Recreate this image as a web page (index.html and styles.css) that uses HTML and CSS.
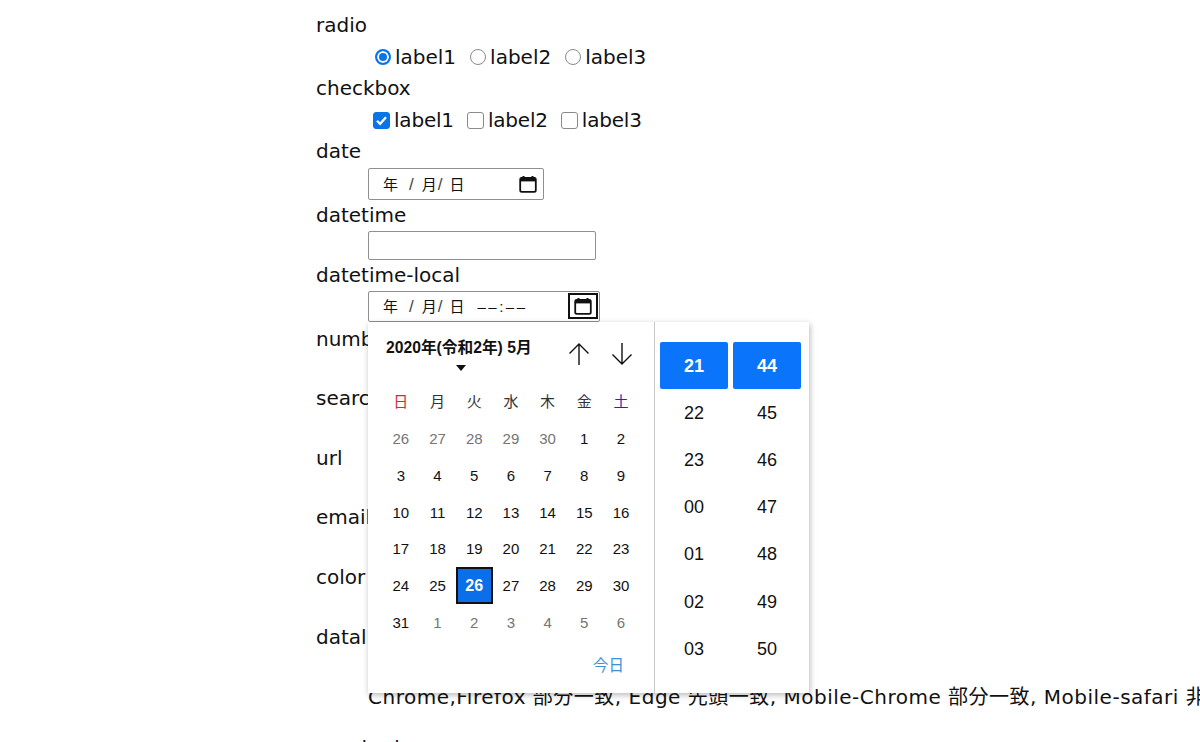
FILE: index.html
```html
<!DOCTYPE html>
<html lang="ja">
<head>
<meta charset="utf-8">
<title>input types</title>
<link rel="stylesheet" href="styles.css">
</head>
<body>
<dl class="form">
  <dt>radio</dt>
  <dd class="choices">
    <label class="choice"><span class="radio on"></span>label1</label>
    <label class="choice"><span class="radio"></span>label2</label>
    <label class="choice"><span class="radio"></span>label3</label>
  </dd>
  <dt>checkbox</dt>
  <dd class="choices checks">
    <label class="choice"><span class="check on"><svg viewBox="0 0 16 16" width="15" height="15"><path d="M3.2 8.3 6.5 11.6 12.8 4.6" fill="none" stroke="#fff" stroke-width="2.4"/></svg></span>label1</label>
    <label class="choice"><span class="check"></span>label2</label>
    <label class="choice"><span class="check"></span>label3</label>
  </dd>
  <dt>date</dt>
  <dd class="row-date">
    <div class="field date">
      <span class="seg"><span class="year">年</span><span class="sl">/</span><span>月</span><span class="sl">/</span><span>日</span></span>
      <svg class="cal" viewBox="0 0 18 18" width="18" height="18"><path d="M4.5 1v2M13.5 1v2" stroke="#111" stroke-width="2"/><rect x="1.2" y="2.8" width="15.6" height="14" rx="1.6" fill="none" stroke="#111" stroke-width="1.8"/><rect x="1.2" y="2.8" width="15.6" height="3.6" fill="#111"/></svg>
    </div>
  </dd>
  <dt>datetime</dt>
  <dd class="row-plain"><div class="field plain"></div></dd>
  <dt>datetime-local</dt>
  <dd class="row-local">
    <div class="field local">
      <span class="seg"><span class="year">年</span><span class="sl">/</span><span>月</span><span class="sl">/</span><span>日</span><span class="time">––:––</span></span>
      <span class="calfocus"><svg class="cal" viewBox="0 0 18 18" width="18" height="18"><path d="M4.5 1v2M13.5 1v2" stroke="#111" stroke-width="2"/><rect x="1.2" y="2.8" width="15.6" height="14" rx="1.6" fill="none" stroke="#111" stroke-width="1.8"/><rect x="1.2" y="2.8" width="15.6" height="3.6" fill="#111"/></svg></span>
    </div>
  </dd>
  <dt>number</dt>
  <dd class="blank"></dd>
  <dt>search</dt>
  <dd class="blank"></dd>
  <dt>url</dt>
  <dd class="blank"></dd>
  <dt>email</dt>
  <dd class="blank"></dd>
  <dt>color</dt>
  <dd class="blank"></dd>
  <dt>datalist</dt>
  <dd class="blank"></dd>
  <dd class="note">Chrome,Firefox 部分一致, Edge 先頭一致, Mobile-Chrome 部分一致, Mobile-safari 非対応</dd>
  <dt>required</dt>
</dl>

<div class="picker">
  <section class="calendar">
    <header class="cal-head">
      <div class="month"><b>2020年(令和2年) 5月</b><i class="caret"></i></div>
      <svg class="arrow" viewBox="0 0 24 24" width="24" height="24"><path d="M12 23V2M2.5 11.5 12 2l9.5 9.5" fill="none" stroke="#111" stroke-width="1.4"/></svg>
      <svg class="arrow" viewBox="0 0 24 24" width="24" height="24"><path d="M12 1v21M2.5 12.5 12 22l9.5-9.5" fill="none" stroke="#111" stroke-width="1.4"/></svg>
    </header>
    <div class="days">
      <span class="wd sun">日</span><span class="wd">月</span><span class="wd">火</span><span class="wd">水</span><span class="wd">木</span><span class="wd">金</span><span class="wd sat">土</span>
      <span class="off">26</span><span class="off">27</span><span class="off">28</span><span class="off">29</span><span class="off">30</span><span>1</span><span>2</span>
      <span>3</span><span>4</span><span>5</span><span>6</span><span>7</span><span>8</span><span>9</span>
      <span>10</span><span>11</span><span>12</span><span>13</span><span>14</span><span>15</span><span>16</span>
      <span>17</span><span>18</span><span>19</span><span>20</span><span>21</span><span>22</span><span>23</span>
      <span>24</span><span>25</span><span class="sel">26</span><span>27</span><span>28</span><span>29</span><span>30</span>
      <span>31</span><span class="off">1</span><span class="off">2</span><span class="off">3</span><span class="off">4</span><span class="off">5</span><span class="off">6</span>
    </div>
    <footer class="cal-foot">今日</footer>
  </section>
  <section class="clock">
    <div class="col"><span class="now">21</span><span>22</span><span>23</span><span>00</span><span>01</span><span>02</span><span>03</span></div>
    <div class="col"><span class="now">44</span><span>45</span><span>46</span><span>47</span><span>48</span><span>49</span><span>50</span></div>
  </section>
</div>
</body>
</html>
```
FILE: styles.css
```css
html, body { margin: 0; height: 100%; overflow: hidden; background: #fff; }
body {
  position: relative;
  font-family: "DejaVu Sans", "Noto Sans CJK JP", sans-serif;
  font-size: 20px;
  color: #111;
}
.form { margin: 0; padding: 10px 0 0 316px; width: 1100px; }
dt { height: 31.5px; line-height: 31.5px; }
dd { margin: 0 0 0 52px; }
.row-date { height: 32px; }
.row-plain { height: 29px; }
.row-plain + dt { height: 30.5px; line-height: 30.5px; }
.row-local { height: 33px; }
.blank { height: 28px; }
.blank + dt { height: 31.7px; }
.note { height: 31.5px; line-height: 33px; white-space: nowrap; margin-bottom: 20px; letter-spacing: .5px; }
.choices { display: flex; gap: 14px; padding-left: 7px; height: 31.5px; align-items: center; }
.checks { padding-left: 5px; gap: 13px; letter-spacing: -.2px; }
.choice { display: flex; align-items: center; gap: 4px; }
.radio { width: 14px; height: 14px; border: 1px solid #8a8a8a; border-radius: 50%; }
.radio.on { border: 2px solid #0a75e6; width: 12px; height: 12px; background: #0a75e6; box-shadow: inset 0 0 0 2px #fff; }
.check { width: 15px; height: 15px; border: 1px solid #8a8a8a; border-radius: 3px; display: block; }
.check.on { background: #0a75e6; border-color: #0a75e6; }
.check svg { display: block; }
.field { box-sizing: border-box; border: 1px solid #8f8f8f; border-radius: 2px; background: #fff; display: flex; align-items: center; justify-content: space-between; }
.date { width: 176px; height: 32px; padding: 0 6px 0 14px; }
.plain { width: 228px; height: 29px; }
.local { width: 232px; height: 31px; padding: 0 1px 0 14px; }
.seg { display: flex; align-items: baseline; font-size: 15px; font-family: "Noto Sans CJK JP", sans-serif; }
.year { margin-right: 11px; }
.sl { margin: 0 8px 0 0; font-size: 17px; color: #444; font-family: "Liberation Sans", sans-serif; }
.sl + span + .sl { margin: 0 7px 0 1px; }
.time { margin-left: 13px; letter-spacing: 2.5px; font-family: "Liberation Sans", sans-serif; }
.cal { display: block; }
.calfocus { border: 2.5px solid #111; width: 30px; height: 26px; box-sizing: border-box; display: flex; align-items: center; justify-content: center; }

.picker {
  position: absolute; left: 368px; top: 322px; width: 441px; height: 371px;
  background: #fff; box-shadow: 1px 2px 6px rgba(0,0,0,.28);
  display: flex;
  font-family: "Liberation Sans", "Noto Sans CJK JP", sans-serif;
}
.calendar { border-right: 1px solid #c8c8c8; display: flex; flex-direction: column; padding: 0 15px; width: 256px; }
.cal-head { display: flex; gap: 19px; height: 60px; padding-top: 19px; box-sizing: border-box; align-items: flex-start; }
.month { flex: none; width: 165px; margin-right: -.0px; padding-left: 3px; box-sizing: border-box; font-size: 15.7px; line-height: 14px; }
.month b { display: block; white-space: nowrap; }
.caret { display: block; margin: 10px 0 0 70px; width: 0; height: 0; border: 5px solid transparent; border-top: 6px solid #111; border-bottom: 0; }
.arrow { display: block; flex: none; margin-top: 1px; }
.days { display: grid; grid-template-columns: repeat(7, 36.7px); grid-template-rows: 38.5px repeat(6, 36.7px); font-size: 15px; margin-left: -.5px; }
.days span { display: flex; align-items: center; justify-content: center; box-sizing: border-box; }
.days .wd { font-size: 15px; color: #333; padding-bottom: 2px; }
.days .sun { color: #e2242f; }
.days .sat { color: #2a1fd0; }
.days .off { color: #757575; }
.days .sel { background: #0a6fe8; color: #fff; font-weight: 700; border: 2px solid #111; font-size: 16px; }
.cal-foot { text-align: right; color: #3f8fd6; font-size: 15.5px; margin-top: 12px; padding-right: 15px; }
.clock { display: flex; gap: 5px; padding: 20px 8px 0 5px; }
.col { width: 68px; display: flex; flex-direction: column; }
.col span { height: 47.2px; padding-top: 1px; box-sizing: border-box; display: flex; align-items: center; justify-content: center; font-size: 18px; flex: none; }
.col .now { background: #0a75fa; color: #fff; font-weight: 700; border-radius: 2px; }
```
